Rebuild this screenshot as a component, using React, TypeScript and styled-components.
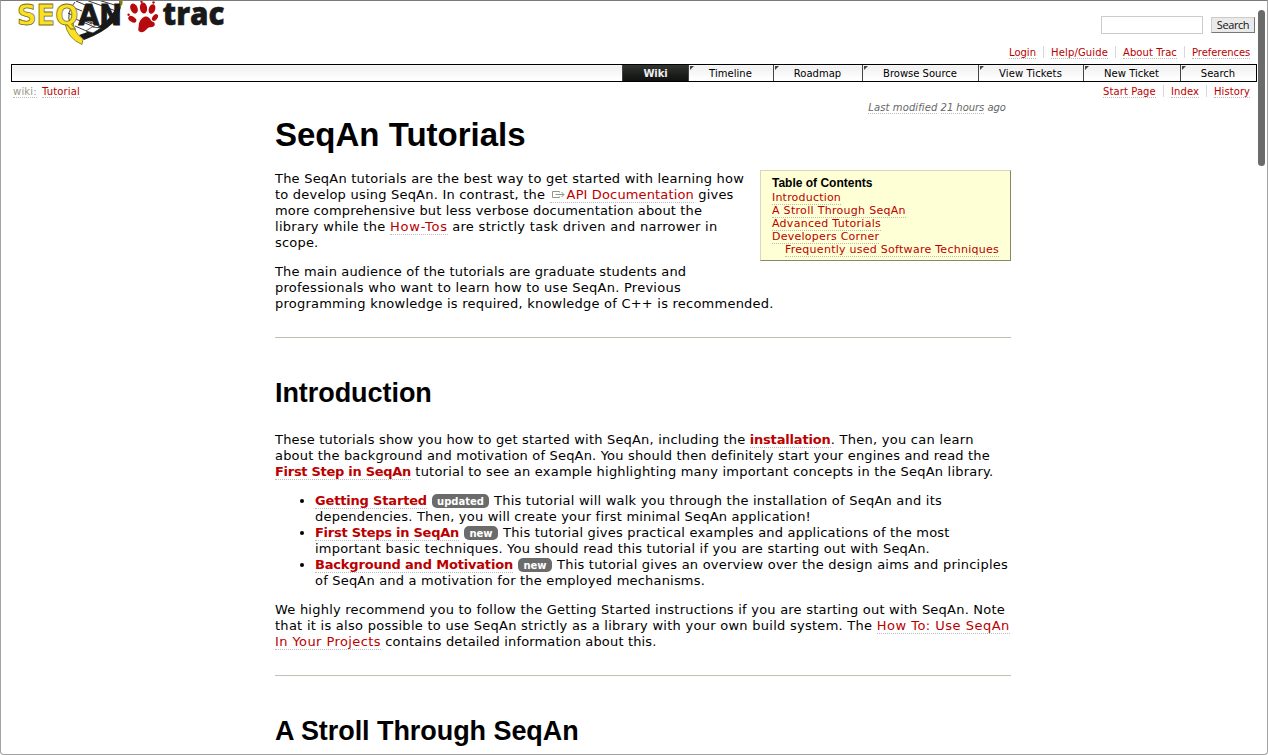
import React from "react";
import styled, { createGlobalStyle, css } from "styled-components";

const verdana = `Verdana, "DejaVu Sans", sans-serif`;
const arial = `Arial, "Liberation Sans", sans-serif`;

const GlobalStyle = createGlobalStyle`
  * { box-sizing: border-box; }
  body { margin: 0; background: #fff; color: #000; font: 13px/16px ${verdana}; }
  h1, h2, h4, p, ul { margin: 0; padding: 0; }
`;

const Window = styled.div`
  position: relative;
  height: 755px;
  overflow: hidden;
  border: 1px solid #a3a3a3;
  border-top-color: #7b7b7b;
  border-radius: 0 0 4px 4px;
`;

const ScrollThumb = styled.div`
  position: absolute;
  top: 9px;
  right: 2px;
  width: 7px;
  height: 156px;
  border-radius: 4px;
  background: #6b6b6b;
`;

const Header = styled.header`
  display: flex;
  justify-content: space-between;
  height: 45px;
  padding: 0 12px 0 14px;
`;

const SearchForm = styled.form`
  display: flex;
  align-items: flex-start;
  gap: 8px;
  padding-top: 15px;
`;

const SearchInput = styled.input`
  width: 102px;
  height: 18px;
  margin: 0;
  padding: 0 3px;
  border: 1px solid #ccc;
  border-radius: 0;
  outline: 0;
`;

const SearchButton = styled.button`
  width: 44px;
  height: 16px;
  margin: 1px 0 0;
  padding: 0;
  border: 1px solid #ccc;
  border-right-color: #777;
  border-bottom-color: #777;
  border-radius: 0;
  background: #eaeaea;
  color: #111;
  font: 11px/14px "Open Sans", sans-serif;
  letter-spacing: -0.4px;
`;

const Track = styled.span<{ $ls?: number }>`
  letter-spacing: ${(p) => p.$ls ?? 0.2}px;
`;

const Link = styled.a<{ $ls?: number; $strong?: boolean; $tone?: string }>`
  color: ${(p) => p.$tone ?? "#b00"};
  letter-spacing: ${(p) => p.$ls ?? 0.2}px;
  border-bottom: 1px dotted #bbb;
  text-decoration: none;
  ${(p) => p.$strong && css`font-weight: bold;`}
`;

const LinkBar = styled.nav<{ $height: number }>`
  display: flex;
  height: ${(p) => p.$height}px;
  font-size: 10px;
  line-height: 14px;
`;

const LinkItem = styled.span<{ $w: number; $first?: boolean; $flush?: boolean }>`
  width: ${(p) => p.$w}px;
  height: 12px;
  padding-left: ${(p) => (p.$flush ? 0 : 7)}px;
  white-space: nowrap;
  border-left: ${(p) => (p.$first ? "0" : "1px solid #d7d7d7")};
`;

const MetaBar = styled(LinkBar)`
  justify-content: flex-end;
  padding-right: 11px;
`;

const ContextBar = styled(LinkBar)`
  justify-content: space-between;
  padding: 3px 10px 0 12px;
`;

const Group = styled.div`
  display: flex;
`;

const MainNav = styled.nav`
  display: grid;
  grid-template-columns: 1fr 66px 85px 89px 116px 105px 97px 76px;
  height: 18px;
  margin: 0 10px;
  border: 1px solid #000;
  background: linear-gradient(#f7f7f7, #f1f1f1 15%, #fff 90%);
`;

const Tab = styled.a<{ $active?: boolean; $ls: number }>`
  position: relative;
  height: 16px;
  border-left: 1px solid #444;
  color: #000;
  font-size: 10px;
  line-height: 18px;
  text-align: center;
  white-space: nowrap;
  letter-spacing: ${(p) => p.$ls}px;
  ${(p) =>
    p.$active
      ? css`
          background: linear-gradient(#333531, #1c1e1b 60%, #111);
          color: #eee;
          font-weight: bold;
        `
      : css`
          padding-right: 1px;
          &::before {
            content: "";
            position: absolute;
            top: 1px;
            left: 1px;
            border-top: 4px solid #444;
            border-right: 4px solid transparent;
          }
        `}
`;

const Modified = styled.div`
  height: 14px;
  color: #666;
  font-size: 10px;
  font-style: italic;
  line-height: 12px;
  text-align: right;
  padding-right: 5px;
`;

const Article = styled.main`
  width: 736px;
  margin-left: 274px;
`;

const Title = styled.h1`
  height: 54px;
  font: bold 33px/38px ${arial};
`;

const Section = styled.h2`
  height: 31px;
  margin: 39px 0 0;
  padding-top: 1px;
  font: bold 27px/31px ${arial};
  letter-spacing: -0.06px;
`;

const Rule = styled.div`
  height: 1px;
  margin-top: 25px;
  background: #c0c0b4;
`;

const Paragraph = styled.p<{ $top?: number }>`
  margin-top: ${(p) => p.$top ?? 13}px;
`;

const Lead = styled.p`
  padding-top: 1px;
`;

const Line = styled.span`
  display: block;
  height: 16px;
  white-space: nowrap;
`;

const List = styled.ul`
  margin-top: 13px;
  padding-left: 40px;
  list-style: disc;
`;

const Badge = styled.span<{ $w: number }>`
  display: inline-block;
  width: ${(p) => p.$w}px;
  height: 14px;
  margin: 1px 5px 0;
  border-radius: 5px;
  background: #6b6b6b;
  color: #fff;
  font-size: 10px;
  font-weight: bold;
  line-height: 15px;
  text-align: center;
  vertical-align: top;
`;

const Toc = styled.aside`
  float: right;
  width: 251px;
  height: 91px;
  padding: 6px 11px;
  border: 1px solid #d7d7bd;
  border-right-color: #886;
  border-bottom-color: #886;
  background: #ffffd5;
  font-size: 11px;
  line-height: 13px;
`;

const TocTitle = styled.h4`
  font: bold 12px/13px ${arial};
  height: 14px;
`;

const TocItem = styled.div<{ $nested?: boolean }>`
  padding-left: ${(p) => (p.$nested ? 13 : 0)}px;
  height: 13px;
  white-space: nowrap;
`;

const ExternalIcon = () => (
  <svg width="17" height="9" viewBox="0 0 17 9" fill="none" stroke="#8a9a80">
    <path d="M9.500 2.500V1.500H2.500v6H9.500V6.500M5.500 4.500h8.500M11.500 2l2.500 2.500L11.500 7" />
  </svg>
);

const Logo = () => (
  <svg width="220" height="45" viewBox="15 1 220 45">
    <path d="M74 1H121Q117 22 82 38L72 24Z" fill="#fff" />
    <g stroke="#222" strokeWidth="0.9" fill="none">
      <path d="M76 1l14 6M86 0l30 11M98 0l20 6M71 17l28 12M68 13l6 3M75 26l16 7M90 22l14 6M72 7l10 4M80 19l12 5" />
      <path d="M75 2Q66 12 70 24" />
    </g>
    <path d="M79 35Q104 27 112 14L121 2Q122 26 84 40Z" fill="#191919" />
    <path d="M86 31l6-4 9 1-8 5Z" fill="#fff" stroke="#222" strokeWidth="0.7" />
    <path d="M119 0h3.500v4L119 9Z" fill="#8c7c10" />
    <path d="M65 23L73 22Q74 33 83 39L82 44.500Q67 38 65 23Z" fill="#fbe122" stroke="#77702a" strokeWidth="0.8" />
    <text x="17" y="25.300" textLength="105" lengthAdjust="spacingAndGlyphs" fontFamily="'DejaVu Sans', sans-serif" fontWeight="bold" fontSize="29">
      <tspan fill="#fbe122" stroke="#77702a" strokeWidth="0.8">SEQ</tspan>
      <tspan fill="#191919" stroke="#191919" strokeWidth="0.8">AN</tspan>
    </text>
    <g fill="#b70a0f">
      <path d="M144 17C147 15.500 150 18 151 20.500C152 22 155 21.500 154.800 24.500C154.500 28 150 26.500 148 28C146 29.500 144 33 140.500 32C137 31 138.800 28 138.800 25C138.800 22 141.500 18 144 17Z" />
      <ellipse cx="134" cy="8.500" rx="3.500" ry="5.200" transform="rotate(-25 134 8.500)" />
      <ellipse cx="143.500" cy="8" rx="3.600" ry="5.600" transform="rotate(-8 143.500 8)" />
      <ellipse cx="152" cy="9" rx="3.200" ry="5" transform="rotate(18 152 9)" />
      <ellipse cx="132.300" cy="19.300" rx="2.700" ry="4.400" transform="rotate(-58 132.300 19.300)" />
      <ellipse cx="155" cy="17.500" rx="2.400" ry="3.800" transform="rotate(38 155 17.500)" />
      <circle cx="141.500" cy="1.800" r="1.200" />
      <circle cx="153.500" cy="2.500" r="1.200" />
      <circle cx="128.600" cy="14.800" r="1.200" />
    </g>
    <text x="162.500" y="24.800" textLength="62" lengthAdjust="spacingAndGlyphs" fontFamily="'Open Sans', sans-serif" fontWeight="800" fontSize="32" fill="#191919" stroke="#191919" strokeWidth="0.5">trac</text>
  </svg>
);

export default function App() {
  return (
    <>
      <GlobalStyle />
      <Window>
        <Header>
          <Logo />
          <SearchForm>
            <SearchInput aria-label="Search" />
            <SearchButton type="button">Search</SearchButton>
          </SearchForm>
        </Header>
        <MetaBar $height={18}>
          <LinkItem $w={41} $first><Link $ls={0}>Login</Link></LinkItem>
          <LinkItem $w={72}><Link $ls={0.15}>Help/Guide</Link></LinkItem>
          <LinkItem $w={69}><Link $ls={0.08}>About Trac</Link></LinkItem>
          <LinkItem $w={72}><Link $ls={-0.05}>Preferences</Link></LinkItem>
        </MetaBar>
        <MainNav>
          <span />
          <Tab $active $ls={-0.1}>Wiki</Tab>
          <Tab $ls={0.05}>Timeline</Tab>
          <Tab $ls={0}>Roadmap</Tab>
          <Tab $ls={0}>Browse Source</Tab>
          <Tab $ls={0.1}>View Tickets</Tab>
          <Tab $ls={0.04}>New Ticket</Tab>
          <Tab $ls={0}>Search</Tab>
        </MainNav>
        <ContextBar $height={20}>
          <Group>
            <LinkItem $w={29} $first $flush><Link $tone="#998" $ls={0.2}>wiki:</Link></LinkItem>
            <LinkItem $w={40} $first $flush><Link $ls={0.15}>Tutorial</Link></LinkItem>
          </Group>
          <Group>
            <LinkItem $w={67} $first><Link $ls={0.1}>Start Page</Link></LinkItem>
            <LinkItem $w={43}><Link $ls={0.1}>Index</Link></LinkItem>
            <LinkItem $w={51}><Link $ls={0.07}>History</Link></LinkItem>
          </Group>
        </ContextBar>
        <Article>
          <Modified>
            <Link $tone="#666" $ls={0.1}>Last modified</Link> <Link $tone="#666" $ls={-0.05}>21 hours</Link> ago
          </Modified>
          <Title>SeqAn Tutorials</Title>
          <Toc>
            <TocTitle>Table of Contents</TocTitle>
            <TocItem><Link $ls={0.2}>Introduction</Link></TocItem>
            <TocItem><Link $ls={0.3}>A Stroll Through SeqAn</Link></TocItem>
            <TocItem><Link $ls={0.28}>Advanced Tutorials</Link></TocItem>
            <TocItem><Link $ls={0.26}>Developers Corner</Link></TocItem>
            <TocItem $nested><Link $ls={0.266}>Frequently used Software Techniques</Link></TocItem>
          </Toc>
          <Lead>
            <Line><Track $ls={0.214}>The SeqAn tutorials are the best way to get started with learning how</Track></Line>
            <Line><Track $ls={0.215}>to develop using SeqAn. In contrast, the </Track> <Link $ls={0.14}><ExternalIcon />API Documentation</Link><Track> gives</Track></Line>
            <Line><Track $ls={0.15}>more comprehensive but less verbose documentation about the</Track></Line>
            <Line><Track $ls={0.29}>library while the </Track><Link $ls={0.8}>How-Tos</Link><Track $ls={0.3}> are strictly task driven and narrower in</Track></Line>
            <Line><Track>scope.</Track></Line>
          </Lead>
          <Paragraph>
            <Line><Track $ls={0.155}>The main audience of the tutorials are graduate students and</Track></Line>
            <Line><Track $ls={0.257}>professionals who want to learn how to use SeqAn. Previous</Track></Line>
            <Line><Track $ls={0.228}>programming knowledge is required, knowledge of C++ is recommended.</Track></Line>
          </Paragraph>
          <Rule />
          <Section>Introduction</Section>
          <Paragraph $top={24}>
            <Line><Track $ls={0.19}>These tutorials show you how to get started with SeqAn, including the </Track><Link $strong $ls={-0.165}>installation</Link><Track $ls={0.267}>. Then, you can learn</Track></Line>
            <Line><Track $ls={0.183}>about the background and motivation of SeqAn. You should then definitely start your engines and read the</Track></Line>
            <Line><Link $strong $ls={-0.289}>First Step in SeqAn</Link><Track $ls={0.211}> tutorial to see an example highlighting many important concepts in the SeqAn library.</Track></Line>
          </Paragraph>
          <List>
            <li>
              <Line><Link $strong $ls={-0.171}>Getting Started</Link><Badge $w={57}>updated</Badge><Track $ls={0.227}>This tutorial will walk you through the installation of SeqAn and its</Track></Line>
              <Line><Track $ls={0.208}>dependencies. Then, you will create your first minimal SeqAn application!</Track></Line>
            </li>
            <li>
              <Line><Link $strong $ls={-0.262}>First Steps in SeqAn</Link><Badge $w={34}>new</Badge><Track $ls={0.2}>This tutorial gives practical examples and applications of the most</Track></Line>
              <Line><Track $ls={0.214}>important basic techniques. You should read this tutorial if you are starting out with SeqAn.</Track></Line>
            </li>
            <li>
              <Line><Link $strong $ls={-0.181}>Background and Motivation</Link><Badge $w={34}>new</Badge><Track $ls={0.223}>This tutorial gives an overview over the design aims and principles</Track></Line>
              <Line><Track $ls={0.197}>of SeqAn and a motivation for the employed mechanisms.</Track></Line>
            </li>
          </List>
          <Paragraph>
            <Line><Track $ls={0.225}>We highly recommend you to follow the Getting Started instructions if you are starting out with SeqAn. Note</Track></Line>
            <Line><Track $ls={0.27}>that it is also possible to use SeqAn strictly as a library with your own build system. The </Track><Link $ls={0.485}>How To: Use SeqAn</Link></Line>
            <Line><Link $ls={0.416}>In Your Projects</Link><Track $ls={0.16}> contains detailed information about this.</Track></Line>
          </Paragraph>
          <Rule />
          <Section>A Stroll Through SeqAn</Section>
        </Article>
        <ScrollThumb />
      </Window>
    </>
  );
}
